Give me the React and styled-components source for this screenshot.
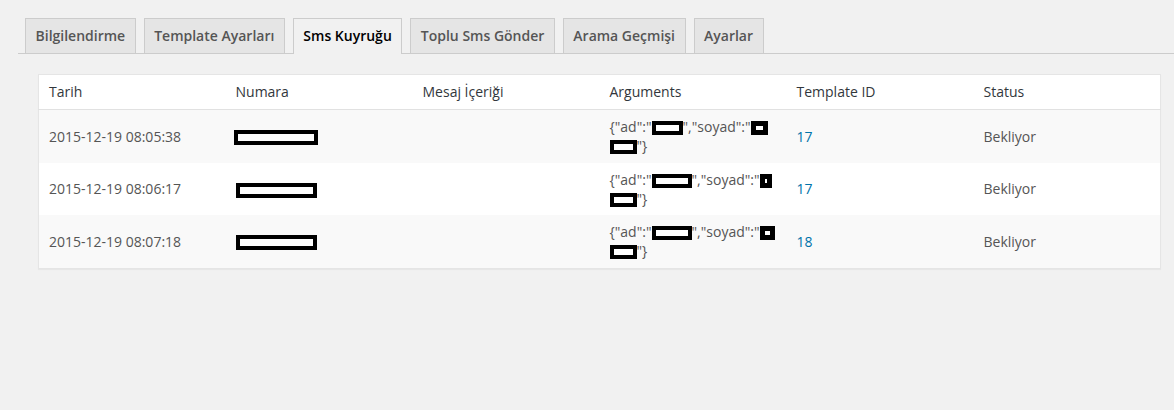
import React from 'react'
import styled, { createGlobalStyle } from 'styled-components'

const GlobalStyle = createGlobalStyle`
  html, body {
    margin: 0;
    padding: 0;
    background: #f1f1f1;
    font-family: 'Open Sans', 'Noto Sans', sans-serif;
    font-size: 14px;
    color: #444;
  }
`

const Page = styled.div`
  min-height: 410px;
  padding: 18px 0 0 18px;
  box-sizing: border-box;
`

const TabBar = styled.div`
  display: flex;
  gap: 8px;
  padding-left: 7px;
  border-bottom: 1px solid #ccc;
  height: 35px;
`

const Tab = styled.a`
  display: block;
  height: 35px;
  box-sizing: border-box;
  padding: 5px 9.5px;
  border: 1px solid #ccc;
  border-bottom: none;
  background: ${({ active }) => (active ? '#f1f1f1' : '#e5e5e5')};
  color: ${({ active }) => (active ? '#000' : '#555')};
  font-size: 14px;
  font-weight: 600;
  line-height: 24px;
  white-space: nowrap;
  cursor: pointer;
  ${({ active }) => active && 'height: 36px; margin-bottom: -1px;'}
`

const Content = styled.div`
  margin: 20px 13px 0 20px;
`

const Table = styled.table`
  width: 100%;
  table-layout: fixed;
  border-collapse: collapse;
  background: #fff;
  border: 1px solid #e5e5e5;
  box-shadow: 0 1px 1px rgba(0, 0, 0, 0.04);
`

const Th = styled.th`
  text-align: left;
  font-weight: 400;
  color: #32373c;
  font-size: 14px;
  line-height: 18px;
  padding: 8px 10px;
  border-bottom: 1px solid #e1e1e1;
`

const Row = styled.tr`
  background: ${({ odd }) => (odd ? '#f9f9f9' : '#fff')};
`

const Td = styled.td`
  vertical-align: middle;
  color: ${({ link }) => (link ? '#0073aa' : '#555')};
  font-size: 14px;
  line-height: 19px;
  padding: 7px 10px 7.6px;
  height: 38px;
`

const Redact = styled.span`
  display: inline-block;
  box-sizing: border-box;
  width: ${({ w }) => w}px;
  height: ${({ h }) => h || 14}px;
  border: ${({ b }) => b || 4}px solid #000;
  background: #fff;
  vertical-align: ${({ va }) => va || '-3px'};
  margin: ${({ m }) => m || '0'};
`

const tabs = ['Bilgilendirme', 'Template Ayarları', 'Sms Kuyruğu', 'Toplu Sms Gönder', 'Arama Geçmişi', 'Ayarlar']

const rows = [
  { date: '2015-12-19 08:05:38', num: { w: 84, m: '0 0 0 -2px' }, ad: 31, soyad: { w: 17, b: 5 }, tail: 27, tid: 17 },
  { date: '2015-12-19 08:06:17', num: { w: 81, m: '0' }, ad: 40, soyad: { w: 12, b: 5 }, tail: 27, tid: 17 },
  { date: '2015-12-19 08:07:18', num: { w: 81, m: '0' }, ad: 40, soyad: { w: 15, b: 5 }, tail: 27, tid: 18 },
]

export default function App() {
  return (
    <Page>
      <GlobalStyle />
      <TabBar>
        {tabs.map((t) => (
          <Tab key={t} active={t === 'Sms Kuyruğu'}>{t}</Tab>
        ))}
      </TabBar>
      <Content>
        <Table>
          <thead>
            <tr>
              <Th>Tarih</Th>
              <Th>Numara</Th>
              <Th>Mesaj İçeriği</Th>
              <Th>Arguments</Th>
              <Th>Template ID</Th>
              <Th>Status</Th>
            </tr>
          </thead>
          <tbody>
            {rows.map((r, i) => (
              <Row key={r.date} odd={i % 2 === 0}>
                <Td>{r.date}</Td>
                <Td>
                  <Redact w={r.num.w} h={15} b={4} m={r.num.m} va="middle" />
                </Td>
                <Td></Td>
                <Td>
                  {'{"ad":"'}
                  <Redact w={r.ad} />
                  {'","soyad":"'}
                  <Redact w={r.soyad.w} b={r.soyad.b} />
                  <br />
                  <Redact w={r.tail} />
                  {'"}'}
                </Td>
                <Td link>{r.tid}</Td>
                <Td>Bekliyor</Td>
              </Row>
            ))}
          </tbody>
        </Table>
      </Content>
    </Page>
  )
}
